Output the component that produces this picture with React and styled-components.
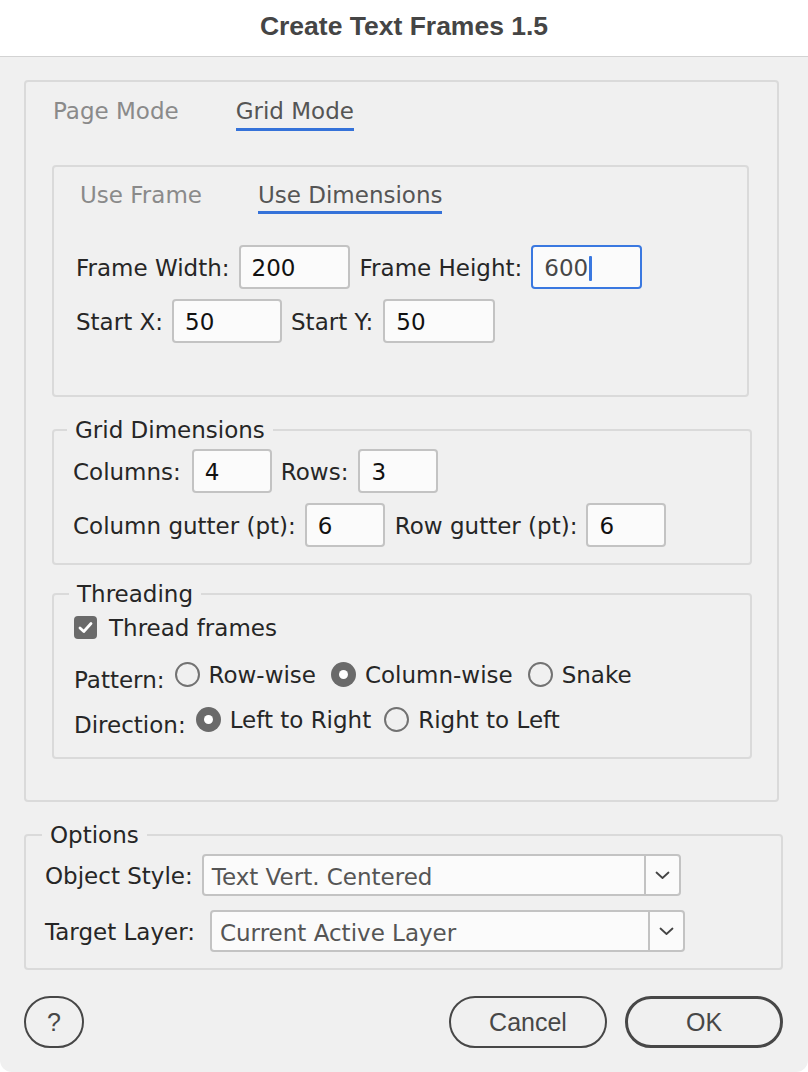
import React from "react";
import styled, { createGlobalStyle } from "styled-components";

const Global = createGlobalStyle`
  html, body { margin: 0; padding: 0; background: #ffffff; }
  body { font-family: "DejaVu Sans", "Open Sans", sans-serif; }
  * { box-sizing: border-box; }
`;

const Dialog = styled.div`
  width: 808px;
  height: 1072px;
  background: #f0f0f0;
  border-radius: 0 0 12px 12px;
  display: flex;
  flex-direction: column;
  overflow: hidden;
`;

const TitleBar = styled.div`
  height: 57px;
  flex: none;
  background: #ffffff;
  border-bottom: 1px solid #d3d3d3;
  display: flex;
  align-items: center;
  justify-content: center;
  padding-bottom: 3px;
  font-family: "Liberation Sans", Arial, sans-serif;
  font-weight: 700;
  font-size: 26.5px;
  color: #454545;
`;

const Body = styled.div`
  padding: 23px 0 0 24px;
  display: flex;
  flex-direction: column;
`;

const Panel = styled.div`
  width: ${(p) => p.$w}px;
  border: 2px solid #dadada;
  border-radius: 4px;
  display: flex;
  flex-direction: column;
`;

const OuterPanel = styled(Panel)`
  padding: 0 0 41px 26px;
`;

const InnerPanel = styled(Panel)`
  padding: 0 0 52px 22px;
  margin-top: 34px;
`;

const TabRow = styled.div`
  display: flex;
  gap: ${(p) => p.$gap}px;
  padding-left: ${(p) => p.$pl}px;
  padding-top: ${(p) => p.$pt}px;
`;

const Tab = styled.div`
  font-size: 23px;
  line-height: 26px;
  padding-bottom: ${(p) => p.$pb}px;
  color: ${(p) => (p.$active ? "#555555" : "#8a8a8a")};
  border-bottom: 3px solid ${(p) => (p.$active ? "#3572d9" : "transparent")};
`;

const Rows = styled.div`
  display: flex;
  flex-direction: column;
  gap: ${(p) => p.$gap}px;
  margin-top: ${(p) => p.$mt || 0}px;
  padding-left: ${(p) => p.$pl || 0}px;
`;

const Row = styled.div`
  display: flex;
  align-items: center;
  gap: 9px;
  height: ${(p) => p.$h || 44}px;
  margin-top: ${(p) => p.$mt || 0}px;
`;

const Label = styled.span`
  font-size: 23px;
  line-height: 26px;
  color: #262626;
  white-space: nowrap;
  margin-left: ${(p) => p.$ml || 0}px;
  margin-top: ${(p) => p.$mt || 2}px;
`;

const Field = styled.div`
  width: ${(p) => p.$w}px;
  height: 44px;
  flex: none;
  margin-left: ${(p) => p.$ml || 0}px;
  background: #fbfbfb;
  border: 2px solid ${(p) => (p.$focus ? "#3a78e0" : "#c3c3c3")};
  border-radius: 4px;
  padding: 2px 0 0 11px;
  display: flex;
  align-items: center;
  font-size: 23px;
  color: ${(p) => (p.$focus ? "#474747" : "#111111")};
`;

const Caret = styled.span`
  width: 3px;
  height: 25px;
  background: #3a78e0;
  border-radius: 1px;
  margin-left: 1px;
`;

const Fieldset = styled.fieldset`
  width: ${(p) => p.$w}px;
  margin: ${(p) => p.$mt}px 0 0 0;
  border: 2px solid #dadada;
  border-radius: 4px;
  padding: ${(p) => p.$pt}px 0 ${(p) => p.$pb}px ${(p) => p.$pl}px;
  min-inline-size: 0;
`;

const Legend = styled.legend`
  font-size: 23px;
  line-height: 26px;
  color: #262626;
  padding: 0 8px;
  margin-left: ${(p) => p.$ml || 0}px;
`;

const CheckBox = styled.span`
  width: 23px;
  height: 23px;
  flex: none;
  border-radius: 4px;
  background: #6a6a6a;
  display: flex;
  align-items: center;
  justify-content: center;
  margin-right: 3px;
`;

const Choice = styled.span`
  display: inline-flex;
  align-items: center;
  gap: 9px;
  margin-left: ${(p) => p.$ml || 0}px;
`;

const Radio = styled.span`
  width: 25px;
  height: 25px;
  flex: none;
  border-radius: 50%;
  border: ${(p) => (p.$checked ? "none" : "2px solid #727272")};
  background: ${(p) => (p.$checked ? "#6a6a6a" : "transparent")};
  display: flex;
  align-items: center;
  justify-content: center;
  &::after {
    content: "";
    display: ${(p) => (p.$checked ? "block" : "none")};
    width: 9px;
    height: 9px;
    border-radius: 50%;
    background: #ffffff;
  }
`;

const Select = styled.div`
  width: ${(p) => p.$w}px;
  height: 42px;
  flex: none;
  margin-left: ${(p) => p.$ml || 0}px;
  background: #fbfbfb;
  border: 2px solid #c3c3c3;
  border-radius: 4px;
  display: flex;
  align-items: stretch;
`;

const SelectText = styled.span`
  flex: 1;
  display: flex;
  align-items: center;
  padding: 3px 0 0 8px;
  font-size: 23px;
  color: #555555;
  white-space: nowrap;
`;

const SelectArrow = styled.span`
  width: 35px;
  flex: none;
  border-left: 2px solid #c3c3c3;
  display: flex;
  align-items: center;
  justify-content: center;
`;

const Footer = styled.div`
  display: flex;
  align-items: center;
  width: 759px;
  margin-top: 26px;
  gap: 18px;
`;

const Button = styled.button`
  width: ${(p) => p.$w}px;
  height: 52px;
  border-radius: 26px;
  background: transparent;
  border: ${(p) => (p.$primary ? "3.5px" : "2px")} solid #474747;
  font-family: "Liberation Sans", Arial, sans-serif;
  font-size: 25px;
  color: #474747;
  padding: 0;
  margin-left: ${(p) => (p.$push ? "auto" : "0")};
  display: flex;
  align-items: center;
  justify-content: center;
`;

const Chevron = () => (
  <svg width="15" height="9" viewBox="0 0 15 9">
    <path d="M1.5 1.5 L7.5 7 L13.5 1.5" fill="none" stroke="#444" strokeWidth="1.8" strokeLinecap="round" strokeLinejoin="round" />
  </svg>
);

const Check = () => (
  <svg width="15" height="13" viewBox="0 0 15 13">
    <path d="M2 7 L5.8 10.5 L13 2.5" fill="none" stroke="#fff" strokeWidth="2.8" strokeLinecap="round" strokeLinejoin="round" />
  </svg>
);

export default function App() {
  return (
    <>
      <Global />
      <Dialog>
        <TitleBar>Create Text Frames 1.5</TitleBar>
        <Body>
          <OuterPanel $w={755}>
            <TabRow $gap={57} $pl={1} $pt={16}>
              <Tab $pb={4}>Page Mode</Tab>
              <Tab $pb={4} $active>Grid Mode</Tab>
            </TabRow>

            <InnerPanel $w={697}>
              <TabRow $gap={56} $pl={4} $pt={15}>
                <Tab $pb={3}>Use Frame</Tab>
                <Tab $pb={3} $active>Use Dimensions</Tab>
              </TabRow>
              <Rows $gap={10} $mt={31}>
                <Row>
                  <Label>Frame Width:</Label>
                  <Field $w={111}>200</Field>
                  <Label $ml={1}>Frame Height:</Label>
                  <Field $w={111} $focus>
                    600
                    <Caret />
                  </Field>
                </Row>
                <Row>
                  <Label>Start X:</Label>
                  <Field $w={110}>50</Field>
                  <Label>Start Y:</Label>
                  <Field $w={112} $ml={1}>50</Field>
                </Row>
              </Rows>
            </InnerPanel>

            <Fieldset $w={700} $mt={20} $pt={6} $pb={16} $pl={13}>
              <Legend>Grid Dimensions</Legend>
              <Rows $gap={10} $pl={6}>
                <Row>
                  <Label>Columns:</Label>
                  <Field $w={80} $ml={2}>4</Field>
                  <Label>Rows:</Label>
                  <Field $w={80} $ml={1}>3</Field>
                </Row>
                <Row>
                  <Label>Column gutter (pt):</Label>
                  <Field $w={80}>6</Field>
                  <Label $ml={1}>Row gutter (pt):</Label>
                  <Field $w={80}>6</Field>
                </Row>
              </Rows>
            </Fieldset>

            <Fieldset $w={700} $mt={16} $pt={4} $pb={20} $pl={13}>
              <Legend $ml={2}>Threading</Legend>
              <Rows $gap={9} $pl={7}>
                <Row $h={30} $mt={1}>
                  <CheckBox>
                    <Check />
                  </CheckBox>
                  <Label>Thread frames</Label>
                </Row>
                <Row $h={36} $mt={5}>
                  <Label $mt={12}>Pattern:</Label>
                  <Choice $ml={1}>
                    <Radio />
                    <Label>Row-wise</Label>
                  </Choice>
                  <Choice $ml={6}>
                    <Radio $checked />
                    <Label>Column-wise</Label>
                  </Choice>
                  <Choice $ml={6}>
                    <Radio />
                    <Label>Snake</Label>
                  </Choice>
                </Row>
                <Row $h={36}>
                  <Label $mt={12}>Direction:</Label>
                  <Choice $ml={1}>
                    <Radio $checked />
                    <Label>Left to Right</Label>
                  </Choice>
                  <Choice $ml={4}>
                    <Radio />
                    <Label>Right to Left</Label>
                  </Choice>
                </Row>
              </Rows>
            </Fieldset>
          </OuterPanel>

          <Fieldset $w={759} $mt={20} $pt={6} $pb={16} $pl={16}>
            <Legend>Options</Legend>
            <Rows $gap={14} $pl={3}>
              <Row $h={42}>
                <Label>Object Style:</Label>
                <Select $w={479} $ml={0}>
                  <SelectText>Text Vert. Centered</SelectText>
                  <SelectArrow>
                    <Chevron />
                  </SelectArrow>
                </Select>
              </Row>
              <Row $h={42}>
                <Label>Target Layer:</Label>
                <Select $w={475} $ml={6}>
                  <SelectText>Current Active Layer</SelectText>
                  <SelectArrow>
                    <Chevron />
                  </SelectArrow>
                </Select>
              </Row>
            </Rows>
          </Fieldset>

          <Footer>
            <Button $w={60}>?</Button>
            <Button $w={158} $push>Cancel</Button>
            <Button $w={158} $primary>OK</Button>
          </Footer>
        </Body>
      </Dialog>
    </>
  );
}
